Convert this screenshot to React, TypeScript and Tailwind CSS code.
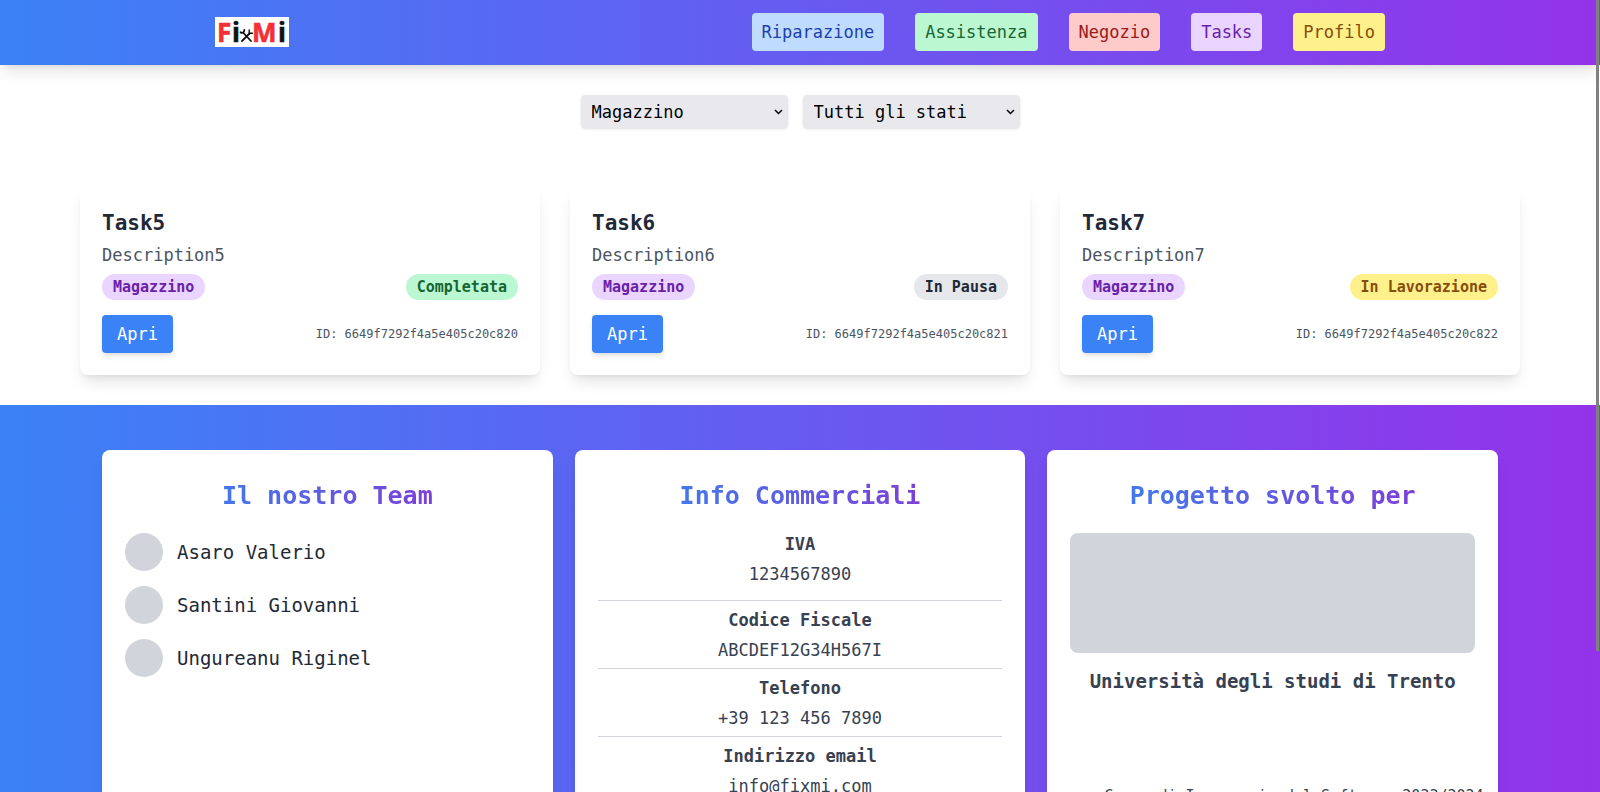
import { ReactNode } from "react";

const navLinks = [
  { label: "Riparazione", tone: "bg-[#bfdbfe] text-[#1e40af]" },
  { label: "Assistenza", tone: "bg-[#bbf7d0] text-[#166534]" },
  { label: "Negozio", tone: "bg-[#fecaca] text-[#991b1b]" },
  { label: "Tasks", tone: "bg-[#e9d5ff] text-[#6b21a8]" },
  { label: "Profilo", tone: "bg-[#fef08a] text-[#854d0e]" },
];

const tasks = [
  { title: "Task5", description: "Description5", state: "Completata", tone: "bg-[#bbf7d0] text-[#166534]", id: "6649f7292f4a5e405c20c820" },
  { title: "Task6", description: "Description6", state: "In Pausa", tone: "bg-[#e5e7eb] text-[#1f2937]", id: "6649f7292f4a5e405c20c821" },
  { title: "Task7", description: "Description7", state: "In Lavorazione", tone: "bg-[#fef08a] text-[#854d0e]", id: "6649f7292f4a5e405c20c822" },
];

const team = ["Asaro Valerio", "Santini Giovanni", "Ungureanu Riginel"];

const company = [
  { label: "Codice Fiscale", value: "ABCDEF12G34H567I" },
  { label: "Telefono", value: "+39 123 456 7890" },
  { label: "Indirizzo email", value: "info@fixmi.com" },
];

function Logo() {
  return (
    <a href="#" aria-label="FixMi" className="block">
      <svg width="74" height="30" viewBox="0 0 74 30" overflow="visible" className="block">
        <rect width="74" height="30" fill="#fff" />
        <g fontFamily="'Open Sans', 'Noto Sans', sans-serif" fontWeight="700" fontSize="26" strokeWidth="0.6">
          <text x="2" y="25" fill="#f33036" stroke="#f33036">F</text>
          <text x="17" y="25" fill="#111" stroke="#111">i</text>
          <text x="37" y="25" fill="#f33036" stroke="#f33036">M</text>
          <text x="63" y="25" fill="#111" stroke="#111">i</text>
        </g>
        <g stroke="#111" strokeWidth="1.800" strokeLinecap="round" fill="none">
          <path d="M28.500 16 36 24" />
          <path d="M34.500 16.500 27 24" />
          <path d="M25.500 15.200c1.500 1.300 4 .3 3.800-2.400" />
          <path d="M34.200 13v3.200h3.300" strokeWidth="1.400" />
        </g>
      </svg>
    </a>
  );
}

function FilterSelect({ label, options, width }: { label: string; options: string[]; width: string }) {
  return (
    <div className="relative">
      <select
        aria-label={label}
        className={`block h-[33px] appearance-none rounded-[4px] bg-[#e9e9ed] pr-7 pl-[11px] text-[17px] leading-[22px] text-black shadow-sm ${width}`}
      >
        {options.map((o) => (
          <option key={o}>{o}</option>
        ))}
      </select>
      <svg width="9" height="6" viewBox="0 0 9 6" className="pointer-events-none absolute top-[14px] right-[5px]">
        <path d="M1 1l3.500 3.500L8 1" fill="none" stroke="#000" strokeWidth="1.500" />
      </svg>
    </div>
  );
}

function Badge({ tone, children }: { tone: string; children: ReactNode }) {
  return <span className={`rounded-full px-[11px] text-[15px] leading-[26px] font-bold ${tone}`}>{children}</span>;
}

function FooterCard({ title, children }: { title: string; children: ReactNode }) {
  return (
    <section className="flex min-h-[420px] flex-col rounded-[8px] bg-white p-[23px] pt-[31px] shadow-lg">
      <h2 className="mb-[22px] self-center bg-linear-to-r/srgb from-[#4378ea] to-[#7c40d8] bg-clip-text text-[25px] leading-[30px] font-bold text-transparent">
        {title}
      </h2>
      {children}
    </section>
  );
}

export default function App() {
  return (
    <div className="bg-white font-['DejaVu_Sans_Mono',monospace] text-[17px] leading-[22px] text-[#374151]">
      <header className="bg-linear-to-r/srgb from-[#3b82f6] to-[#9333ea] shadow-lg">
        <div className="mx-auto flex max-w-[1170px] items-center justify-between pt-[13px] pb-[14px]">
          <Logo />
          <nav className="flex gap-[31px]">
            {navLinks.map((l) => (
              <a key={l.label} href="#" className={`rounded-[4px] px-[10px] py-[8px] ${l.tone}`}>
                {l.label}
              </a>
            ))}
          </nav>
        </div>
      </header>

      <main className="mx-auto max-w-[1440px] pt-[30px] pb-[30px]">
        <div className="mb-[59px] flex justify-center gap-[15px]">
          <FilterSelect label="Tipo" options={["Magazzino", "Riparazione", "Assistenza"]} width="w-[207px]" />
          <FilterSelect label="Stato" options={["Tutti gli stati", "Completata", "In Pausa", "In Lavorazione"]} width="w-[217px]" />
        </div>
        <div className="grid grid-cols-3 gap-[30px]">
          {tasks.map((t) => (
            <article key={t.id} className="rounded-[8px] bg-white px-[22px] pt-[23px] pb-[22px] shadow-lg">
              <h2 className="mb-[8px] text-[21px] leading-[26px] font-bold text-[#1f2937]">{t.title}</h2>
              <p className="mb-[8px] text-[#4b5563]">{t.description}</p>
              <div className="mb-[15px] flex justify-between">
                <Badge tone="bg-[#e9d5ff] text-[#6b21a8]">Magazzino</Badge>
                <Badge tone={t.tone}>{t.state}</Badge>
              </div>
              <div className="flex items-center justify-between">
                <button type="button" className="rounded-[4px] bg-[#3b82f6] px-[15px] py-[8px] text-white shadow-md">
                  Apri
                </button>
                <span className="text-[12px] leading-[15px] text-[#4b5563]">ID: {t.id}</span>
              </div>
            </article>
          ))}
        </div>
      </main>

      <footer className="bg-linear-to-r/srgb from-[#3b82f6] to-[#9333ea] py-[45px]">
        <div className="mx-auto grid max-w-[1440px] grid-cols-3 gap-[22px] px-[22px]">
          <FooterCard title="Il nostro Team">
            <ul className="flex flex-col gap-[15px]">
              {team.map((name) => (
                <li key={name} className="flex items-center gap-[14px] text-[19px] text-[#1f2937]">
                  <span className="size-[38px] rounded-full bg-[#d1d5db]" />
                  {name}
                </li>
              ))}
            </ul>
          </FooterCard>
          <FooterCard title="Info Commerciali">
            <dl className="text-center">
              <div className="pb-[15px]">
                <dt className="mb-[8px] font-bold">IVA</dt>
                <dd>1234567890</dd>
              </div>
              {company.map((c) => (
                <div key={c.label} className="border-t border-[#d1d5db] pt-[8px] pb-[7px]">
                  <dt className="mb-[8px] font-bold">{c.label}</dt>
                  <dd>{c.value}</dd>
                </div>
              ))}
            </dl>
          </FooterCard>
          <FooterCard title="Progetto svolto per">
            <div className="h-[120px] rounded-[8px] bg-[#d1d5db]" />
            <p className="mt-[17px] text-center text-[19px] font-bold whitespace-nowrap">Università degli studi di Trento</p>
            <p className="mt-[93px] pl-[34px] text-[15px] whitespace-nowrap">Corso di Ingegneria del Software 2023/2024</p>
          </FooterCard>
        </div>
      </footer>

      <div aria-hidden="true" className="fixed top-0 right-[1px] h-[651px] w-[3px] bg-[#808080]" />
    </div>
  );
}
